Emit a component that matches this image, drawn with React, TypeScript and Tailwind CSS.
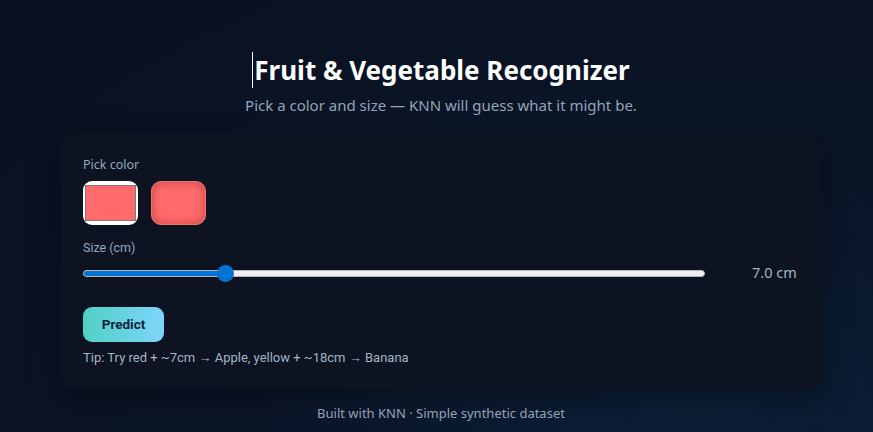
import React from "react";

const segoe = "font-['Noto_Sans','Open_Sans',sans-serif]";
const roboto = "font-['Roboto','Liberation_Sans',sans-serif]";

export default function App() {
  const min = 1;
  const max = 28;
  const size = 7;
  const pct = ((size - min) / (max - min)) * 100;

  return (
    <div className="min-h-screen w-full bg-[radial-gradient(ellipse_at_80%_100%,#0c1e36_0%,#0a1528_45%,#08111f_100%)] flex flex-col items-center pt-[52px] pl-[9px]">
      {/* Header */}
      <h1 className={`${segoe} text-white font-bold text-[26px] leading-[36px] flex items-center`}>
        <span className="inline-block w-px h-[36px] bg-white mr-px" />
        Fruit &amp; Vegetable Recognizer
      </h1>
      <p className={`${segoe} text-[#94a3b8] text-[15px] leading-[22px] mt-[6px]`}>
        Pick a color and size — KNN will guess what it might be.
      </p>

      {/* Card */}
      <div className="mt-[17px] w-[760px] rounded-xl bg-[#0d1320] shadow-[0_10px_30px_rgba(0,0,0,0.35)] px-[22px] pt-[22px] pb-[21px]">
        <div className={`${segoe} text-[12.5px] leading-[20px] text-[#93a9c0]`}>Pick color</div>
        <div className="flex gap-[13px] mt-[6px]">
          <div className="w-[55px] h-[44px] bg-white rounded-[9px] px-[2px] py-[4px]">
            <div className="w-full h-full bg-[#ff6b6b] border border-[#7a7a7a]" />
          </div>
          <div className="w-[55px] h-[44px] rounded-[10px] bg-[#ff6b6b] border border-[#f27474] shadow-[inset_0_0_10px_rgba(120,20,20,0.45)]" />
        </div>

        <div className={`${roboto} text-[12.5px] leading-[20px] text-[#93a9c0] mt-[13px]`}>Size (cm)</div>
        <div className="flex items-center mt-[5px] h-[20px]">
          <div className="relative w-[622px] h-[20px] flex items-center">
            <div className="w-full h-[7px] rounded-full bg-[#efefef] border border-[#b5b5b5] overflow-hidden">
              <div className="h-full bg-[#0075d5]" style={{ width: `${pct}%` }} />
            </div>
            <div
              className="absolute top-1/2 w-[17px] h-[17px] -mt-[8.5px] -ml-[8.5px] rounded-full bg-[#0075d5]"
              style={{ left: `calc(8px + ${pct / 100} * (100% - 16px))` }}
            />
          </div>
          <div className={`${segoe} ml-[47px] text-[14.5px] text-[#a3b3c4]`}>7.0 cm</div>
        </div>

        <button
          className={`${roboto} mt-[24px] w-[81px] h-[35px] rounded-[9px] bg-[linear-gradient(90deg,#4fd1c5,#7fd4fb)] text-[#0f2436] font-bold text-[13.5px]`}
        >
          Predict
        </button>

        <div className={`${roboto} mt-[7px] text-[13px] leading-[18px] text-[#a3b3c4]`}>
          Tip: Try red + ~7cm → Apple, yellow + ~18cm → Banana
        </div>
      </div>

      <div className={`${segoe} mt-[15px] text-[13px] leading-[20px] text-[#94a3b8]`}>
        Built with KNN · Simple synthetic dataset
      </div>
    </div>
  );
}
